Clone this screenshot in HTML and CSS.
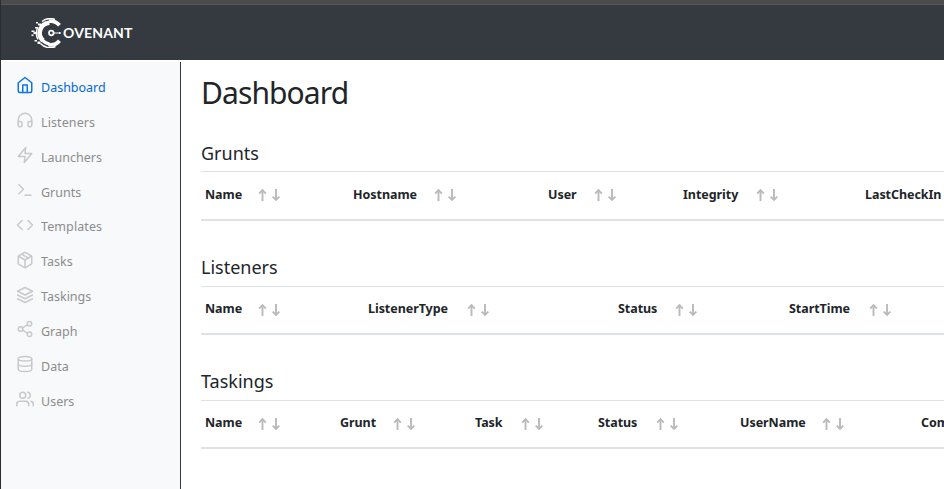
FILE: index.html
```html
<!DOCTYPE html>
<html lang="en">
<head>
<meta charset="utf-8">
<title>Covenant</title>
<link rel="stylesheet" href="styles.css">
</head>
<body>
<svg class="defs" width="0" height="0" aria-hidden="true">
  <symbol id="sort" viewBox="0 0 24 14"><path d="M4.500 13V2M18 1v11"/><path d="M1.200 5.600 4.500 2.200l3.300 3.400M14.700 8.600l3.300 3.400 3.300-3.400"/></symbol>
</svg>
<div class="window">
<header class="topbar">
  <a class="brand">
    <svg class="logo" viewBox="0 0 32 30" fill="none" stroke="#fff">
      <path stroke-width="3.800" d="M28.500 7.300A11.800 11.800 0 0 0 18 3.200M28.500 22.700A11.800 11.800 0 0 1 17.500 26.700"/>
      <path stroke-width="4.600" d="M18.500 4.800A10.200 10.200 0 0 0 12 22.500"/>
      <path stroke-width="1.400" d="M11 3.500A13 13 0 0 1 24 1.500M7 9a13 13 0 0 0 0 12.500M9.500 25.500a13 13 0 0 0 15 3"/>
      <path stroke-width="3" d="M11.500 22q2.500 3.300 7 4"/>
      <circle cx="20.300" cy="15" r="2.300" stroke-width="1.700"/>
      <path stroke-width="1" d="M23 15h6"/>
      <path fill="#fff" stroke="none" d="M5 4h2v1.500H5zM7 5.500h3v2H7zM4 9h2v1.500H4zM.500 12.500h3V14h-3zM2.500 14h3v2h-3zM.500 16.500h2V18h-2zM3.500 22h2.500v1.500H3.500zM6.500 23.500h3V26h-3zM28 14h1.600v2H28z"/>
    </svg>
    <span class="wordmark">OVENANT</span>
  </a>
</header>
<div class="body">
  <nav class="sidebar">
    <a class="item active"><svg viewBox="0 0 24 24"><path d="M3 9l9-7 9 7v11a2 2 0 0 1-2 2H5a2 2 0 0 1-2-2z"/><path d="M9 22V12h6v10"/></svg><span>Dashboard</span></a>
    <a class="item"><svg viewBox="0 0 24 24"><path d="M3 18v-6a9 9 0 0 1 18 0v6"/><path d="M21 19a2 2 0 0 1-2 2h-1a2 2 0 0 1-2-2v-3a2 2 0 0 1 2-2h3zM3 19a2 2 0 0 0 2 2h1a2 2 0 0 0 2-2v-3a2 2 0 0 0-2-2H3z"/></svg><span class="looser">Listeners</span></a>
    <a class="item"><svg viewBox="0 0 24 24"><path d="M13 2 3 14h9l-1 8 10-12h-9z"/></svg><span>Launchers</span></a>
    <a class="item"><svg viewBox="0 0 24 24"><path d="M4 17l6-6-6-6M12 19h8"/></svg><span>Grunts</span></a>
    <a class="item"><svg viewBox="0 0 24 24"><path d="M16 18l6-6-6-6M8 6l-6 6 6 6"/></svg><span class="looser">Templates</span></a>
    <a class="item"><svg viewBox="0 0 24 24"><path d="M16.500 9.400 7.500 4.210M21 16V8a2 2 0 0 0-1-1.730l-7-4a2 2 0 0 0-2 0l-7 4A2 2 0 0 0 3 8v8a2 2 0 0 0 1 1.730l7 4a2 2 0 0 0 2 0l7-4A2 2 0 0 0 21 16z"/><path d="M3.270 6.960 12 12.010l8.730-5.050M12 22.080V12"/></svg><span>Tasks</span></a>
    <a class="item"><svg viewBox="0 0 24 24"><path d="M12 2 2 7l10 5 10-5zM2 17l10 5 10-5M2 12l10 5 10-5"/></svg><span>Taskings</span></a>
    <a class="item"><svg viewBox="0 0 24 24"><circle cx="18" cy="5" r="3"/><circle cx="6" cy="12" r="3"/><circle cx="18" cy="19" r="3"/><path d="M8.590 13.510l6.830 3.980M15.410 6.510l-6.820 3.980"/></svg><span>Graph</span></a>
    <a class="item"><svg viewBox="0 0 24 24"><ellipse cx="12" cy="5" rx="9" ry="3"/><path d="M21 12c0 1.660-4 3-9 3s-9-1.340-9-3"/><path d="M3 5v14c0 1.660 4 3 9 3s9-1.340 9-3V5"/></svg><span>Data</span></a>
    <a class="item"><svg viewBox="0 0 24 24"><path d="M17 21v-2a4 4 0 0 0-4-4H5a4 4 0 0 0-4 4v2"/><circle cx="9" cy="7" r="4"/><path d="M23 21v-2a4 4 0 0 0-3-3.870M16 3.130a4 4 0 0 1 0 7.750"/></svg><span>Users</span></a>
  </nav>
  <main class="content">
    <h1>Dashboard</h1>
    <section>
      <h2>Grunts</h2>
      <div class="head grunts">
        <span>Name</span><svg><use href="#sort"/></svg>
        <span>Hostname</span><svg><use href="#sort"/></svg>
        <span>User</span><svg><use href="#sort"/></svg>
        <span>Integrity</span><svg><use href="#sort"/></svg>
        <span>LastCheckIn</span>
      </div>
    </section>
    <section>
      <h2>Listeners</h2>
      <div class="head listeners">
        <span>Name</span><svg><use href="#sort"/></svg>
        <span>ListenerType</span><svg><use href="#sort"/></svg>
        <span>Status</span><svg><use href="#sort"/></svg>
        <span>StartTime</span><svg><use href="#sort"/></svg>
      </div>
    </section>
    <section>
      <h2>Taskings</h2>
      <div class="head taskings">
        <span>Name</span><svg><use href="#sort"/></svg>
        <span>Grunt</span><svg><use href="#sort"/></svg>
        <span>Task</span><svg><use href="#sort"/></svg>
        <span>Status</span><svg><use href="#sort"/></svg>
        <span>UserName</span><svg><use href="#sort"/></svg>
        <span>Command</span>
      </div>
    </section>
  </main>
</div>
</div>
</body>
</html>
```
FILE: styles.css
```css
* { box-sizing: border-box; }
body {
  margin: 0;
  height: 489px;
  overflow: hidden;
  background: #fff;
  color: #212529;
  font-family: "Noto Sans", "Open Sans", sans-serif;
}
.defs { display: block; }
.window {
  height: 489px;
  border-left: 1px solid #2b2b30;
  display: flex;
  flex-direction: column;
}
.topbar {
  flex: none;
  height: 60px;
  border-top: 4px solid #4b4b4b;
  background: #343a40;
  box-shadow: inset 0 1px #58585a;
  padding: 14px 0 0 30px;
}
.brand { display: flex; align-items: flex-start; color: #fff; }
.logo { width: 32px; height: 30px; }
.wordmark {
  font: bold 14px/30px Lato, sans-serif;
  letter-spacing: 0.15px;
}
.body { flex: 1; display: flex; min-height: 0; padding-top: 2px; }
.sidebar {
  flex: none;
  width: 180px;
  border-right: 1px solid #343a40;
  background: #f8f9fb;
  padding: 8px 0 0 15px;
}
.item {
  display: flex;
  height: 34.870px;
  align-items: center;
  gap: 7px;
  color: #8c8c8c;
  font-size: 12.500px;
}
.item .looser { letter-spacing: 0.1px; }
.item svg {
  width: 18px;
  height: 18px;
  position: relative;
  top: -2px;
  fill: none;
  stroke: #c9c9c9;
  stroke-width: 2;
  stroke-linecap: round;
  stroke-linejoin: round;
}
.item.active { color: #0069d9; }
.item.active svg { stroke: #0d75e4; }
.content { flex: 1; min-width: 0; padding-left: 20px; overflow: hidden; }
h1 {
  margin: 10px 0 28px;
  font-size: 30px;
  font-weight: 400;
  line-height: 42px;
  letter-spacing: -0.9px;
}
section { height: 114px; }
h2 {
  margin: 0;
  height: 29px;
  font-size: 18px;
  font-weight: 400;
  line-height: 22px;
}
section + section h2 { height: 30px; }
.head {
  display: grid;
  width: 1100px;
  height: 50px;
  padding-left: 4px;
  border-top: 1px solid #dee2e6;
  border-bottom: 2px solid #dee2e6;
  font-size: 12.500px;
  font-weight: 700;
  line-height: 46px;
  letter-spacing: -0.050px;
  white-space: nowrap;
}
section + section .head { height: 49px; line-height: 44px; }
.head svg {
  width: 24px;
  height: 14px;
  margin-top: 16px;
  fill: none;
  stroke: #b9babd;
  stroke-width: 1.900;
}
.grunts { grid-template-columns: 53px 95px 81px 114px 46px 89px 73px 109px 100px; }
.listeners { grid-template-columns: 53px 110px 99px 151px 57px 114px 80px 100px; }
.taskings { grid-template-columns: 53px 82px 53px 82px 46px 77px 58px 84px 82px 99px 80px; }
```
